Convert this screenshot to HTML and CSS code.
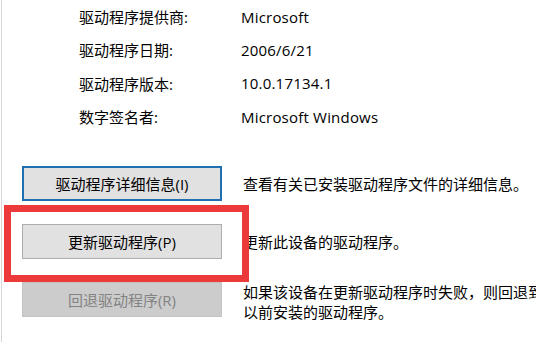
FILE: index.html
```html
<!DOCTYPE html>
<html lang="zh-CN">
<head>
    <meta charset="UTF-8">
    <title>驱动程序</title>
    <link rel="stylesheet" href="styles.css">
</head>
<body>
    <div class="panel">
        <div class="info">
            <div class="info-row"><span class="label">驱动程序提供商:</span><span class="value">Microsoft</span></div>
            <div class="info-row"><span class="label">驱动程序日期:</span><span class="value">2006/6/21</span></div>
            <div class="info-row"><span class="label">驱动程序版本:</span><span class="value">10.0.17134.1</span></div>
            <div class="info-row"><span class="label">数字签名者:</span><span class="value">Microsoft Windows</span></div>
        </div>

        <div class="actions">
            <div class="action-row">
                <button class="btn btn-default">驱动程序详细信息(I)</button>
                <div class="desc">查看有关已安装驱动程序文件的详细信息。</div>
            </div>
            <div class="action-row">
                <button class="btn">更新驱动程序(P)</button>
                <div class="desc">更新此设备的驱动程序。</div>
                <div class="highlight"></div>
            </div>
            <div class="action-row action-top">
                <button class="btn" disabled>回退驱动程序(R)</button>
                <div class="desc">如果该设备在更新驱动程序时失败，则回退到<br>以前安装的驱动程序。</div>
            </div>
        </div>
    </div>
</body>
</html>
```

FILE: styles.css
```css
body {
    margin: 0;
    background-color: #fff;
    font-family: "Open Sans", "Noto Sans CJK SC", sans-serif;
    font-size: 15px;
    color: #000;
    overflow: hidden;
}
.panel {
    margin-left: 1px;
    border-left: 1px solid #d6d6d6;
    height: 342px;
}
.info {
    padding-left: 77px;
}
.info-row {
    display: flex;
    align-items: center;
    height: 33.3px;
}
.label {
    width: 162px;
}
.value {
    letter-spacing: 0.2px;
}
.actions {
    margin-top: 33px;
    padding-left: 20px;
    display: flex;
    flex-direction: column;
    gap: 23px;
}
.action-row {
    display: flex;
    align-items: center;
    gap: 21px;
    position: relative;
}
.action-top {
    align-items: flex-start;
}
.btn {
    width: 200px;
    height: 35px;
    flex-shrink: 0;
    font-family: inherit;
    font-size: 15px;
    color: #000;
    background-color: #e1e1e1;
    border: 1px solid #adadad;
    padding: 0;
}
.btn-default {
    border: 2px solid #1f6fb2;
}
.btn:disabled {
    background-color: #cccccc;
    border-color: #c4c4c4;
    color: #838383;
}
.desc {
    line-height: 20px;
    white-space: nowrap;
}
.highlight {
    position: absolute;
    left: -18px;
    top: -19px;
    width: 231px;
    height: 63px;
    border: 7px solid #ec393a;
}
```
